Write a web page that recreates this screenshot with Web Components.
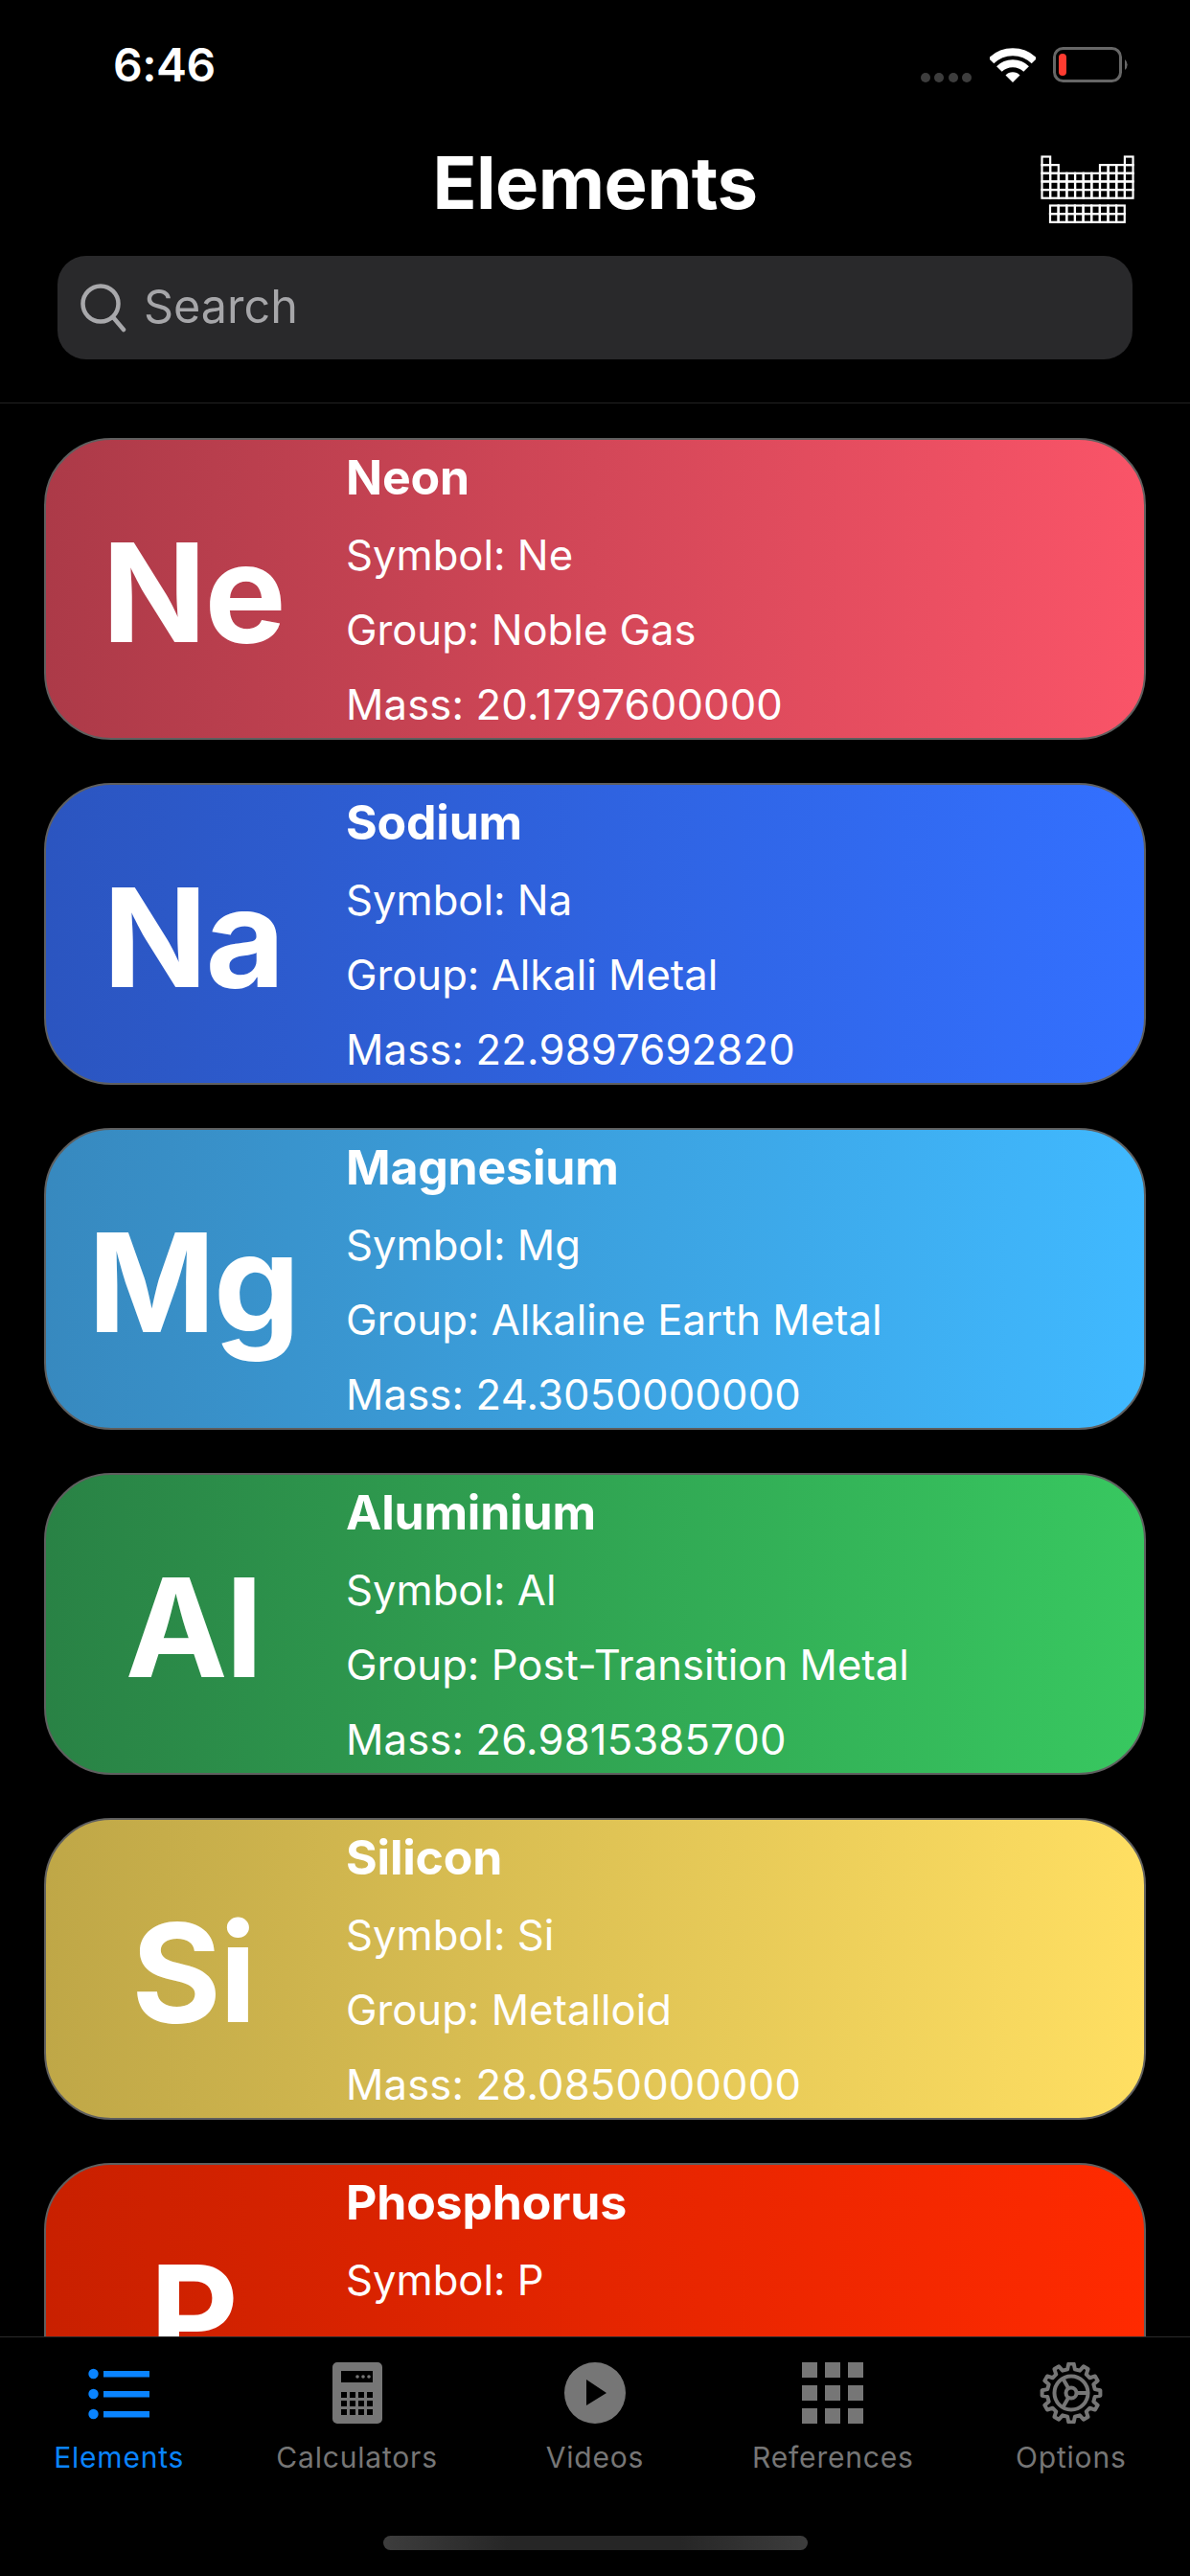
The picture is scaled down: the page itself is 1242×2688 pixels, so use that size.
<!DOCTYPE html>
<html>
<head>
<meta charset="utf-8">
<title>Elements</title>
<style>
  html, body { margin: 0; background: #000; }
  body { width: 1242px; height: 2688px; overflow: hidden; font-family: Inter, "Liberation Sans", sans-serif; color: #fff; }
  #app { display: flex; flex-direction: column; height: 2688px; }
</style>
</head>
<body>
<div id="app">
  <status-bar time="6:46"></status-bar>
  <nav-header title="Elements"></nav-header>
  <search-field placeholder="Search"></search-field>
  <element-list>
    <element-card name="Neon" symbol="Ne" group="Noble Gas" mass="20.1797600000" from="#ac3a48" to="#fa5468"></element-card>
    <element-card name="Sodium" symbol="Na" group="Alkali Metal" mass="22.9897692820" from="#2b55c0" to="#3370ff"></element-card>
    <element-card name="Magnesium" symbol="Mg" group="Alkaline Earth Metal" mass="24.3050000000" from="#3789bf" to="#40b9ff"></element-card>
    <element-card name="Aluminium" symbol="Al" group="Post-Transition Metal" mass="26.9815385700" from="#298245" to="#38c860"></element-card>
    <element-card name="Silicon" symbol="Si" group="Metalloid" mass="28.0850000000" from="#bfa747" to="#ffdf62"></element-card>
    <element-card name="Phosphorus" symbol="P" from="#c92000" to="#ff2a00"></element-card>
  </element-list>
  <tab-bar>
    <tab-item label="Elements" icon="list" active></tab-item>
    <tab-item label="Calculators" icon="calc"></tab-item>
    <tab-item label="Videos" icon="play"></tab-item>
    <tab-item label="References" icon="grid"></tab-item>
    <tab-item label="Options" icon="gear"></tab-item>
  </tab-bar>
</div>

<script>
class StatusBar extends HTMLElement {
  constructor() {
    super();
    this.attachShadow({ mode: 'open' });
    this.shadowRoot.innerHTML = `
      <style>
        :host { display: flex; align-items: flex-start; justify-content: space-between; height: 88px; flex: none; }
        .time { margin: 39px 0 0 118px; font-size: 48px; line-height: 58px; font-weight: 600; letter-spacing: -.5px; }
        .right { display: flex; align-items: flex-start; margin: 49px 63px 0 0; }
        .dots { display: flex; gap: 4.5px; margin: 27px 19px 0 0; }
        .dots i { width: 10px; height: 10px; border-radius: 50%; background: #3d3d3d; }
        svg { display: block; }
      </style>
      <span class="time"></span>
      <div class="right">
        <div class="dots"><i></i><i></i><i></i><i></i></div>
        <svg width="48" height="38" viewBox="0 0 48 38" style="margin-right:18px">
          <path d="M1.5 14.5 A32 32 0 0 1 46.5 14.5" fill="none" stroke="#fff" stroke-width="8"/>
          <path d="M9.9 23 A20 20 0 0 1 38.1 23" fill="none" stroke="#fff" stroke-width="8"/>
          <path d="M24 37 L16.5 29.5 A10.5 10.5 0 0 1 31.5 29.5 Z" fill="#fff"/>
        </svg>
        <svg width="80" height="38" viewBox="0 0 80 38">
          <rect x="1.5" y="1.5" width="69" height="34" rx="9" fill="none" stroke="#666" stroke-width="3"/>
          <rect x="6" y="7" width="8" height="23" rx="4" fill="#ff3b30"/>
          <path d="M75 13 A7 7 0 0 1 75 24 Z" fill="#666"/>
        </svg>
      </div>`;
    this.shadowRoot.querySelector('.time').textContent = this.getAttribute('time');
  }
}
customElements.define('status-bar', StatusBar);

class PeriodicIcon extends HTMLElement {
  constructor() {
    super();
    this.attachShadow({ mode: 'open' });
    const s = 8.64;
    let cells = '';
    const cell = (c, r, ox, oy) => {
      cells += `<rect x="${(ox + c * s).toFixed(2)}" y="${(oy + r * s).toFixed(2)}" width="${s}" height="${s}"/>`;
    };
    for (let r = 0; r < 5; r++) {
      for (let c = 0; c < 11; c++) {
        if (r == 0 && c > 0 && c < 10) continue;
        if (r == 1 && c > 1 && c < 7) continue;
        cell(c, r, 1.5, 1.5);
      }
    }
    for (let r = 0; r < 2; r++) {
      for (let c = 0; c < 9; c++) cell(c, r, 10, 52.5);
    }
    this.shadowRoot.innerHTML = `
      <style>
        :host { display: block; width: 98px; height: 73px; }
        svg { display: block; }
      </style>
      <svg width="98" height="73" viewBox="0 0 98 73" fill="none" stroke="#fff" stroke-width="2.2">${cells}</svg>`;
  }
}
customElements.define('periodic-icon', PeriodicIcon);

class NavHeader extends HTMLElement {
  constructor() {
    super();
    this.attachShadow({ mode: 'open' });
    this.shadowRoot.innerHTML = `
      <style>
        :host { display: grid; grid-template-columns: 1fr auto 1fr; align-items: center; height: 179px; flex: none; padding: 25px 60px 0; box-sizing: border-box; }
        h1 { margin: 0; font-size: 76px; line-height: 84px; font-weight: 700; letter-spacing: -.6px; }
        periodic-icon { justify-self: end; margin-right: -2px; margin-top: 17px; }
      </style>
      <span></span>
      <h1></h1>
      <periodic-icon></periodic-icon>`;
    this.shadowRoot.querySelector('h1').textContent = this.getAttribute('title');
  }
}
customElements.define('nav-header', NavHeader);

class SearchField extends HTMLElement {
  constructor() {
    super();
    this.attachShadow({ mode: 'open' });
    this.shadowRoot.innerHTML = `
      <style>
        :host { display: block; flex: none; padding: 0 60px 45px; border-bottom: 1px solid #222; }
        .box { display: flex; align-items: center; gap: 18px; height: 108px; padding-left: 22px; background: #29292b; border-radius: 30px; }
        span { font-size: 48.5px; line-height: 58px; color: #a6a6a9; margin-top: -2px; }
        svg { display: block; flex: none; }
      </style>
      <div class="box">
        <svg width="50" height="52" viewBox="0 0 50 52" fill="none" stroke="#a8a8ab" stroke-width="4.5">
          <circle cx="23" cy="22" r="18.5"/>
          <path d="M36 36 L47 49" stroke-linecap="round"/>
        </svg>
        <span></span>
      </div>`;
    this.shadowRoot.querySelector('span').textContent = this.getAttribute('placeholder');
  }
}
customElements.define('search-field', SearchField);

class ElementList extends HTMLElement {
  constructor() {
    super();
    this.attachShadow({ mode: 'open' });
    this.shadowRoot.innerHTML = `
      <style>
        :host { display: flex; flex-direction: column; gap: 45px; flex: 1; min-height: 0; overflow: hidden; padding: 36px 46px 0; }
      </style>
      <slot></slot>`;
  }
}
customElements.define('element-list', ElementList);

class ElementCard extends HTMLElement {
  constructor() {
    super();
    this.attachShadow({ mode: 'open' });
    this.shadowRoot.innerHTML = `
      <style>
        :host { display: grid; grid-template-columns: 313px 1fr; flex: none; height: 315px; box-sizing: border-box; border: 2px solid #5f5f5f; border-radius: 70px; color: #fff; overflow: hidden; }
        .big { display: flex; align-items: center; justify-content: center; padding-right: 6px; font-size: 143px; line-height: 1; font-weight: 700; letter-spacing: -2px; }
        .info { display: flex; flex-direction: column; font-size: 43.6px; line-height: 78px; white-space: nowrap; }
        .name { margin-bottom: 4px; font-size: 50px; font-weight: 700; letter-spacing: -.2px; }
        .mass { letter-spacing: .15px; }
      </style>
      <div class="big"></div>
      <div class="info">
        <div class="name"></div>
        <div class="sym"></div>
      </div>`;
    const root = this.shadowRoot;
    const sym = this.getAttribute('symbol');
    root.querySelector('.big').textContent = sym;
    root.querySelector('.name').textContent = this.getAttribute('name');
    root.querySelector('.sym').textContent = 'Symbol: ' + sym;
    // lines under the tab bar are left out
    [['Group: ', 'group'], ['Mass: ', 'mass']].forEach(([label, attr]) => {
      if (!this.hasAttribute(attr)) return;
      const line = document.createElement('div');
      line.className = attr;
      line.textContent = label + this.getAttribute(attr);
      root.querySelector('.info').appendChild(line);
    });
    this.style.background = `linear-gradient(90deg, ${this.getAttribute('from')}, ${this.getAttribute('to')}) border-box`;
  }
}
customElements.define('element-card', ElementCard);

class TabBar extends HTMLElement {
  constructor() {
    super();
    this.attachShadow({ mode: 'open' });
    this.shadowRoot.innerHTML = `
      <style>
        :host { display: flex; flex-direction: column; flex: none; height: 250px; box-sizing: border-box; background: #000; border-top: 1px solid #2a2a2a; position: relative; }
        .tabs { display: grid; grid-template-columns: repeat(5, 1fr); }
        .home { width: 443px; height: 15px; margin: 63px auto 0; border-radius: 8px; background: linear-gradient(90deg, #3d3d3d, #262626 30%, #262626 70%, #3d3d3d); }
      </style>
      <div class="tabs"><slot></slot></div>
      <div class="home"></div>`;
  }
}
customElements.define('tab-bar', TabBar);

function gearPath(cx, cy, teeth, outer, inner) {
  let d = '';
  const step = Math.PI * 2 / teeth;
  for (let i = 0; i < teeth; i++) {
    const a = i * step - Math.PI / 2;
    const pts = [[inner, a - step * .3], [outer, a - step * .17], [outer, a + step * .17], [inner, a + step * .3]];
    pts.forEach((p, j) => {
      const x = (cx + p[0] * Math.cos(p[1])).toFixed(2);
      const y = (cy + p[0] * Math.sin(p[1])).toFixed(2);
      d += (i == 0 && j == 0 ? 'M' : 'L') + x + ' ' + y + ' ';
    });
  }
  return d + 'Z';
}

const calcKeys = [];
for (let r = 0; r < 3; r++) {
  for (let c = 0; c < 4; c++) calcKeys.push(`M${17 + c * 9} ${31 + r * 9}h6v6h-6z`);
}
const calcDots = [34, 40, 46].map(x => `<circle cx="${x}" cy="15" r="1.8"/>`).join('');

const tabIcons = {
  list: `<circle cx="7.5" cy="12" r="5.2"/><circle cx="7.5" cy="33" r="5.2"/><circle cx="7.5" cy="54" r="5.2"/>
         <rect x="18" y="9" width="48" height="6.5"/><rect x="18" y="30" width="48" height="6.5"/><rect x="18" y="51" width="48" height="6.5"/>`,
  calc: `<path fill-rule="evenodd" d="M13 0h42a5 5 0 0 1 5 5v54a5 5 0 0 1-5 5h-42a5 5 0 0 1-5-5v-54a5 5 0 0 1 5-5z
         M17 9v12h33v-12z ${calcKeys.join(' ')}"/>${calcDots}`,
  play: `<path fill-rule="evenodd" d="M34 0a32 32 0 1 0 0 64a32 32 0 1 0 0-64z M25 18l21 14l-21 13z"/>`,
  grid: [0, 24, 48].map(y => [2, 26, 50].map(x => `<rect x="${x}" y="${y}" width="16" height="16"/>`).join('')).join(''),
  gear: `<g fill="none" stroke="currentColor" stroke-width="4" stroke-linejoin="round">
           <path d="${gearPath(34, 32, 12, 30.5, 25)}"/>
           <circle cx="34" cy="32" r="17.5"/>
           <circle cx="34" cy="32" r="5.5"/>
           <path d="M39.5 32H51M31.2 27.2L25.5 17.3M31.2 36.8L25.5 46.7"/>
         </g>`
};

class TabItem extends HTMLElement {
  constructor() {
    super();
    this.attachShadow({ mode: 'open' });
    const active = this.hasAttribute('active');
    const kind = this.getAttribute('icon');
    this.shadowRoot.innerHTML = `
      <style>
        :host { display: flex; flex-direction: column; align-items: center; padding-top: 26px; color: ${active ? '#0a84ff' : '#767676'}; }
        svg { display: block; fill: currentColor; }
        span { margin-top: 16px; font-size: 30px; line-height: 38px; letter-spacing: .8px; white-space: nowrap; }
      </style>
      <svg width="68" height="64" viewBox="0 0 68 64">${tabIcons[kind]}</svg>
      <span></span>`;
    this.shadowRoot.querySelector('span').textContent = this.getAttribute('label');
  }
}
customElements.define('tab-item', TabItem);
</script>
</body>
</html>
